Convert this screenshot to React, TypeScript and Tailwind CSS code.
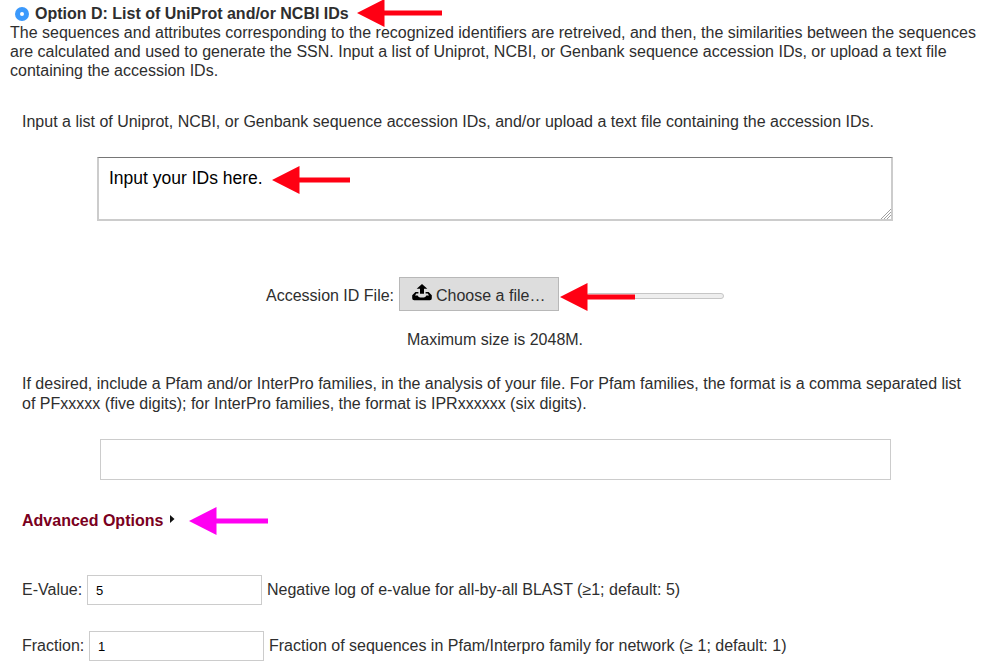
import type { ReactNode } from "react";

function Line({ className = "", children }: { className?: string; children: ReactNode }) {
  return <div className={`whitespace-nowrap ${className}`}>{children}</div>;
}

function Arrow({ className, width = 85 }: { className: string; width?: number }) {
  return (
    <svg className={`shrink-0 ${className}`} width={width} height={28} viewBox={`0 0 ${width} 28`} fill="currentColor">
      <path d={`M0 14 27.5 0V11.5H${width}V16.5H27.5V28Z`} />
    </svg>
  );
}

function UploadIcon() {
  return (
    <svg className="mb-[3px] shrink-0" width="20" height="17" viewBox="0 0 20 17" fill="#000">
      <path d="M10 0 15.3 4.8H12V9.8H8V4.8H4.7Z" />
      <path d="M3.4 8H6.4V9.6H4.3L3 11.6H5.6Q6.6 13.6 8.2 13.6H11.8Q13.4 13.6 14.4 11.6H17L15.7 9.6H13.6V8H16.6L19.8 11.2V14.2Q19.8 16.2 17.8 16.2H2.2Q.2 16.2 .2 14.2V11.2Z" />
    </svg>
  );
}

export default function App() {
  return (
    <main className="flex h-[672px] w-[988px] flex-col overflow-hidden bg-white font-['Liberation_Sans',Arial,sans-serif] text-[16px] leading-[19px] text-[#2e2e2e]">
      <div className="flex h-[23px] items-start pl-[15px]">
        <span className="mt-[7px] flex size-[14px] shrink-0 items-center justify-center rounded-full bg-[#3b99fc]">
          <span className="size-[4px] rounded-full bg-white" />
        </span>
        <Line className="mt-1 ml-[6px] w-[322px] font-bold">Option D: List of UniProt and/or NCBI IDs</Line>
        <Arrow className="-mt-px text-[#ff0013]" />
      </div>
      <div className="h-[89px] pl-[10px]">
        <Line>The sequences and attributes corresponding to the recognized identifiers are retreived, and then, the similarities between the sequences</Line>
        <Line>are calculated and used to generate the SSN. Input a list of Uniprot, NCBI, or Genbank sequence accession IDs, or upload a text file</Line>
        <Line>containing the accession IDs.</Line>
      </div>
      <Line className="h-[45px] pl-[22px]">Input a list of Uniprot, NCBI, or Genbank sequence accession IDs, and/or upload a text file containing the accession IDs.</Line>
      <div className="ml-[97px] flex h-16 w-[796px] shrink-0 justify-between border-2 border-t border-[#ccc] border-t-[#767676]">
        <div className="flex">
          <Line className="mt-[11px] ml-[10px] w-[163px] text-[17.5px] text-black">Input your IDs here.</Line>
          <Arrow className="mt-[8px] text-[#ff0013]" width={78} />
        </div>
        <svg className="self-end" width="11" height="11" viewBox="0 0 11 11" fill="none" stroke="#a0a0a0">
          <path d="M1 11 11 1M4 11 11 4M7 11 11 7" />
        </svg>
      </div>
      <div className="mt-14 flex h-[34px] shrink-0 items-center pl-[266px]">
        <Line className="w-[133px] pt-[2px]">Accession ID File:</Line>
        <div className="flex h-[34px] w-[160px] items-center border border-[#b8b8b8] bg-[#ddd] pl-[12px]">
          <UploadIcon />
          <Line className="ml-[4px] pt-[2px]">Choose a file…</Line>
        </div>
        <Arrow className="relative z-10 ml-[1px] mt-[5px] text-[#ff0013]" width={75} />
        <div className="-ml-[49px] mt-[4px] h-[6px] w-[138px] rounded-full border border-[#c6c6c6] bg-[#eee]" />
      </div>
      <Line className="mt-[19px] h-[44px] pl-[407px]">Maximum size is 2048M.</Line>
      <div className="h-[65px] pl-[22px] leading-5">
        <Line>If desired, include a Pfam and/or InterPro families, in the analysis of your file. For Pfam families, the format is a comma separated list</Line>
        <Line>of PFxxxxx (five digits); for InterPro families, the format is IPRxxxxxx (six digits).</Line>
      </div>
      <div className="ml-[100px] h-[41px] w-[791px] shrink-0 border border-[#ccc]" />
      <div className="mt-[27px] flex h-[28px] shrink-0 items-center pl-[22px]">
        <Line className="mb-[2px] w-[148px] font-bold text-[#7a0020]">Advanced Options</Line>
        <svg className="-mt-[4px]" width="19" height="8" viewBox="0 0 19 8"><path d="M0 0 4.5 4 0 8Z" fill="#111" /></svg>
        <Arrow className="text-[#ff00f2]" width={79} />
      </div>
      <div className="mt-10 flex h-[30px] shrink-0 pl-[22px]">
        <Line className="mt-[5px] w-[65px]">E-Value:</Line>
        <div className="h-[30px] w-[175px] border border-[#ccc] pt-[5px] pl-2 text-[13px] text-black">5</div>
        <Line className="mt-[5px] ml-[5px]">Negative log of e-value for all-by-all BLAST (≥1; default: 5)</Line>
      </div>
      <div className="mt-[26px] flex h-[30px] shrink-0 pl-[22px]">
        <Line className="mt-[5px] w-[67px]">Fraction:</Line>
        <div className="h-[30px] w-[175px] border border-[#ccc] pt-[5px] pl-2 text-[13px] text-black">1</div>
        <Line className="mt-[5px] ml-[5px]">Fraction of sequences in Pfam/Interpro family for network (≥ 1; default: 1)</Line>
      </div>
    </main>
  );
}
